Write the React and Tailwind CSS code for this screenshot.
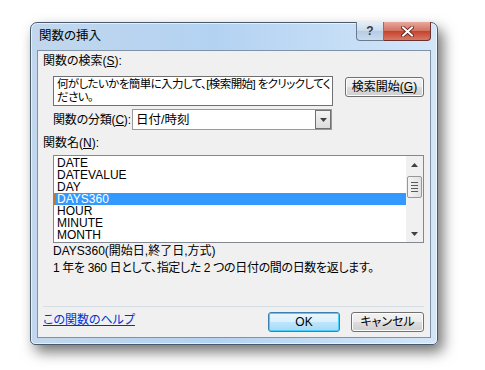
// App.jsx — 関数の挿入 ダイアログ (Windows 7 Aero 風)

const FONT = "font-['Liberation_Sans','Noto_Sans_CJK_JP',sans-serif] [font-feature-settings:'palt']"

const FUNCS = ['DATE', 'DATEVALUE', 'DAY', 'DAYS360', 'HOUR', 'MINUTE', 'MONTH']
const SELECTED = 'DAYS360'

function Boton({ children, porDefecto = false, className = '' }) {
  return (
    <div
      className={`h-[20px] rounded-[3px] border flex items-center justify-center text-[12px] leading-[12px] text-black whitespace-nowrap
        ${porDefecto
          ? 'border-[#3c7fb1] shadow-[inset_0_0_0_1px_#48d0fc] bg-[linear-gradient(#eaf6fd_0%,#d9f0fc_50%,#bee6fd_50%,#a7d9f5_100%)]'
          : 'border-[#707070] shadow-[inset_0_0_0_1px_#fcfcfc] bg-[linear-gradient(#f2f2f2_0%,#ebebeb_50%,#dddddd_50%,#cfcfcf_100%)]'}
        ${className}`}
    >
      {children}
    </div>
  )
}

function Triangulo({ arriba = false, className = '' }) {
  return (
    <svg width="7" height="4" viewBox="0 0 7 4" className={className}>
      {arriba
        ? <path d="M3.5 0 L7 4 L0 4 Z" fill="#404040" />
        : <path d="M0 0 L7 0 L3.5 4 Z" fill="#404040" />}
    </svg>
  )
}

function BarraScroll() {
  return (
    <div className="w-[17px] h-full bg-[#f0f0f0] flex flex-col items-center">
      <div className="h-[17px] w-full flex items-center justify-center">
        <Triangulo arriba />
      </div>
      <div className="mt-[3px] h-[22px] w-[15px] rounded-[2px] border border-[#979797] bg-[linear-gradient(to_right,#f3f3f3,#e2e2e2)] flex flex-col items-center justify-center gap-[2px]">
        <div className="w-[7px] h-[1px] bg-[#5a5a5a]" />
        <div className="w-[7px] h-[1px] bg-[#5a5a5a]" />
        <div className="w-[7px] h-[1px] bg-[#5a5a5a]" />
        <div className="w-[7px] h-[1px] bg-[#5a5a5a]" />
      </div>
      <div className="flex-1" />
      <div className="h-[17px] w-full flex items-center justify-center">
        <Triangulo />
      </div>
    </div>
  )
}

export default function App() {
  return (
    <div className={`w-[485px] h-[370px] bg-white pt-[22px] pl-[30px] ${FONT}`}>

      {/* ── Ventana ── */}
      <div className="w-[408px] h-[323px] rounded-t-[7px] rounded-b-[5px] border border-[#4a5a6c] px-[6px] pb-[6px] bg-[linear-gradient(to_right,#c2d7ed,#b3d2f2_45%,#d3e6f9)] shadow-[5px_7px_14px_rgba(0,0,0,0.55),inset_0_0_0_1px_rgba(255,255,255,0.6)]">

        {/* Barra de título */}
        <div className="h-[27px] flex items-start">
          <div className="pl-[2px] pt-[6px] text-[12.5px] leading-[14px] text-black">関数の挿入</div>
          <div className="flex-1" />
          <div className="-mt-[1px] flex">
            <div className="w-[28px] h-[19px] rounded-bl-[4px] border border-t-0 border-[#6b7b8e] bg-[linear-gradient(#e6eef7,#c9daee_50%,#b6cbe3_50%,#c8dbef)] flex items-center justify-center text-[12px] font-bold text-[#3a3a3a]">
              ?
            </div>
            <div className="w-[47px] h-[19px] rounded-br-[4px] border border-l-0 border-t-0 border-[#6b3030] bg-[linear-gradient(#e9a99c,#d2705f_50%,#c4402e_50%,#d77a62)] flex items-center justify-center">
              <svg width="13" height="11" viewBox="0 0 13 11">
                <path d="M2 1.5 L11 9.5 M11 1.5 L2 9.5" stroke="#5a1a12" strokeWidth="3.6" strokeLinecap="square" />
                <path d="M2 1.5 L11 9.5 M11 1.5 L2 9.5" stroke="#ffffff" strokeWidth="2" strokeLinecap="square" />
              </svg>
            </div>
          </div>
        </div>

        {/* Área cliente */}
        <div className="h-[288px] border border-[#7f93a8] bg-[#f0f0f0] text-[12px] leading-[14px] text-black flex flex-col whitespace-nowrap">

          {/* Búsqueda */}
          <div className="mt-[3px] pl-[5px]">関数の検索(<span className="underline">S</span>):</div>
          <div className="mt-[8px] ml-[15px] flex items-start">
            <div className="w-[280px] h-[30px] border border-[#707070] bg-white pl-[3px] pt-[1px] leading-[13px] overflow-hidden text-[11.5px] tracking-[-0.6px]">
              何がしたいかを簡単に入力して、[検索開始] をクリックしてく<br />ださい。
            </div>
            <Boton className="ml-[12px] mt-[1px] w-[79px]">
              検索開始(<span className="underline">G</span>)
            </Boton>
          </div>

          {/* Categoría */}
          <div className="mt-[3px] ml-[15px] flex items-center">
            <div className="w-[79px] tracking-[-0.2px]">関数の分類(<span className="underline">C</span>):</div>
            <div className="w-[200px] h-[21px] border border-[#9a9a9a] bg-white flex items-center">
              <div className="flex-1 pl-[3px] text-[12.5px]">日付/時刻</div>
              <div className="w-[16px] h-[19px] border border-[#707070] bg-[linear-gradient(#f4f4f4,#dcdcdc)] flex items-center justify-center">
                <Triangulo />
              </div>
            </div>
          </div>

          {/* Lista de funciones */}
          <div className="mt-[6px] pl-[5px]">関数名(<span className="underline">N</span>):</div>
          <div className="mt-[5px] ml-[15px] w-[371px] h-[88px] border border-[#828790] bg-white flex">
            <div className="flex-1 pt-[1px]">
              {FUNCS.map((f) => (
                <div
                  key={f}
                  className={`h-[12px] leading-[12px] pl-[3px] ${f === SELECTED
                    ? 'bg-[#3399ff] text-white outline outline-1 -outline-offset-1 outline-dotted outline-[#c27a2e]'
                    : ''}`}
                >
                  {f}
                </div>
              ))}
            </div>
            <BarraScroll />
          </div>

          {/* Descripción */}
          <div className="mt-[1px] ml-[15px]">DAYS360(開始日,終了日,方式)</div>
          <div className="mt-[3px] ml-[15px] tracking-[-0.35px]">1 年を 360 日として、指定した 2 つの日付の間の日数を返します。</div>

          {/* Separador */}
          <div className="mt-[31px] ml-[5px] w-[381px] h-[1px] bg-[#d5dfe5]" />

          {/* Pie */}
          <div className="mt-[5px] ml-[5px] w-[381px] flex items-start">
            <div className="mt-[1px] text-[#0033cc] underline">この関数のヘルプ</div>
            <div className="flex-1" />
            <Boton porDefecto className="w-[72px]">OK</Boton>
            <Boton className="ml-[11px] w-[73px]">キャンセル</Boton>
          </div>

        </div>
      </div>
    </div>
  )
}
